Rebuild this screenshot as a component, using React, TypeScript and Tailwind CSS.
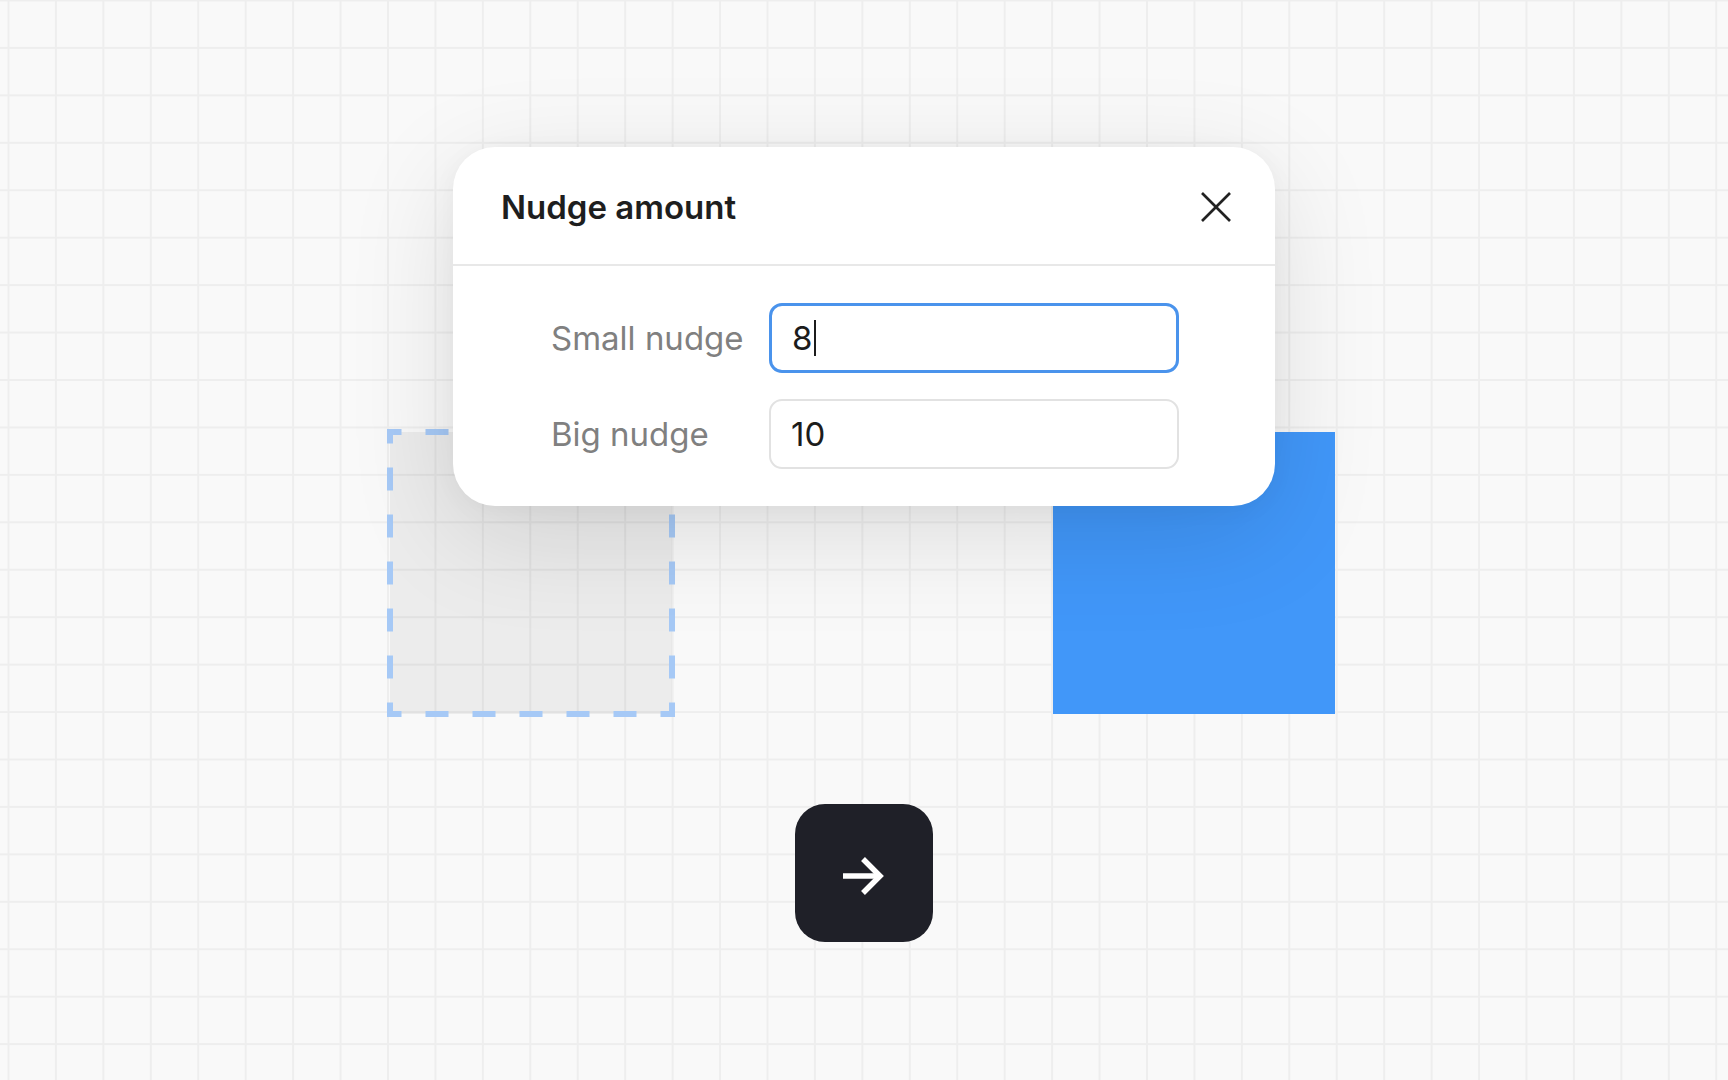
export default function App() {
  return (
    <div className="relative h-[1080px] w-[1728px] overflow-hidden bg-[#f9f9f9] bg-[image:linear-gradient(to_right,#eeeeee_1.5px,transparent_1.5px),linear-gradient(to_bottom,#eeeeee_1.5px,transparent_1.5px)] bg-[size:47.45px_47.45px] bg-[position:7.5px_-0.5px] font-[family-name:Inter,'Noto_Sans',sans-serif]">
      {/* ghost (original position) */}
      <div className="absolute left-[387px] top-[429px] h-[288px] w-[288px]">
        <div className="absolute inset-[3px] bg-black/[0.05]" />
        <svg className="absolute inset-0" width="288" height="288" viewBox="0 0 288 288">
          <g stroke="#a6c9f6" strokeWidth="6" strokeDasharray="23 24" strokeDashoffset="8.5" fill="none">
            <line x1="0" y1="3" x2="288" y2="3" />
            <line x1="0" y1="285" x2="288" y2="285" />
            <line x1="3" y1="0" x2="3" y2="288" />
            <line x1="285" y1="0" x2="285" y2="288" />
          </g>
        </svg>
      </div>

      {/* nudged shape */}
      <div className="absolute left-[1053px] top-[432px] h-[282px] w-[282px] bg-[#4197f9]" />

      {/* dialog */}
      <div className="absolute left-[453px] top-[147px] w-[822px] rounded-[42px] bg-white shadow-[0_28px_110px_rgba(0,0,0,0.12),0_4px_24px_rgba(0,0,0,0.04)]">
        <div className="flex h-[119px] items-center justify-between border-b-2 border-[#e8e8e8] pl-[48px] pr-[44px]">
          <div className="mt-[3px] text-[33px] font-semibold leading-none text-[#1e1e1e]">Nudge amount</div>
          <svg className="mt-[2px]" width="30" height="30" viewBox="0 0 30 30">
            <g stroke="#222222" strokeWidth="2.6" strokeLinecap="butt">
              <line x1="1" y1="1" x2="29" y2="29" />
              <line x1="29" y1="1" x2="1" y2="29" />
            </g>
          </svg>
        </div>
        <div className="flex flex-col gap-[26px] pb-[37px] pl-[98px] pt-[37px]">
          <div className="flex items-center">
            <div className="mt-[1px] w-[218px] text-[33px] leading-none text-[#808080]">Small nudge</div>
            <div className="flex h-[70px] w-[410px] items-center rounded-[13px] border-[3px] border-[#4a93ec] px-[20px] text-[33px] leading-none text-[#1c1c1c]">
              <span className="mt-[1px]">8</span>
              <span className="ml-[2px] h-[36px] w-[2px] bg-[#1c1c1c]" />
            </div>
          </div>
          <div className="flex items-center">
            <div className="mt-[1px] w-[218px] text-[33px] leading-none text-[#808080]">Big nudge</div>
            <div className="flex h-[70px] w-[410px] items-center rounded-[13px] border-2 border-[#e2e2e2] px-[20px] text-[33px] leading-none text-[#1c1c1c]">
              <span className="mt-[1px]">10</span>
            </div>
          </div>
        </div>
      </div>

      {/* action button */}
      <div className="absolute left-[795px] top-[804px] flex h-[138px] w-[138px] items-center justify-center rounded-[30px] bg-[#1f2028]">
        <svg width="138" height="138" viewBox="0 0 138 138">
          <g stroke="#ffffff" strokeWidth="5.5" fill="none" strokeLinecap="butt" strokeLinejoin="miter">
            <line x1="48" y1="72" x2="84" y2="72" />
            <polyline points="68,55 85,72 68,89" />
          </g>
        </svg>
      </div>
    </div>
  );
}
